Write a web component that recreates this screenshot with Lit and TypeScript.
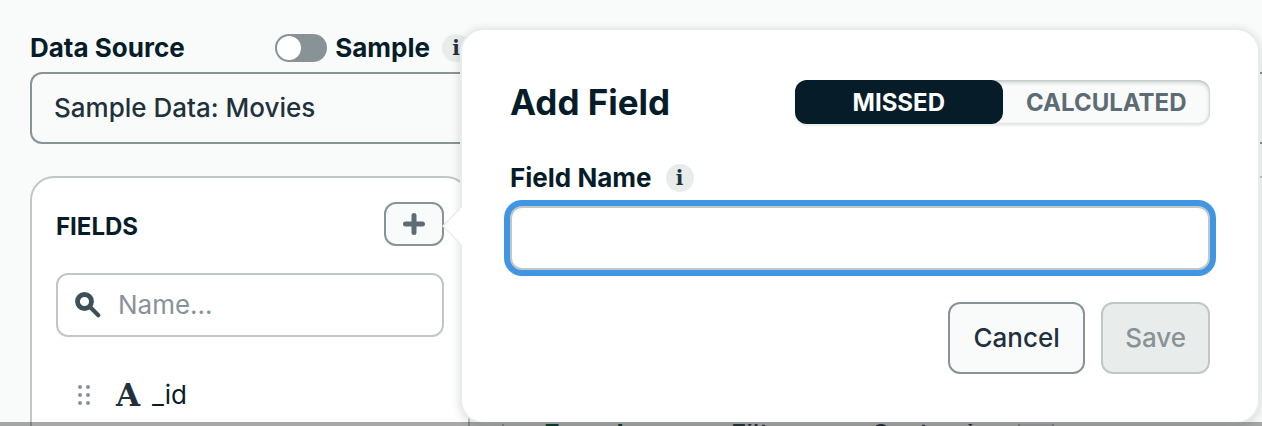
import { LitElement, html, svg, css } from "lit";
import { customElement, state } from "lit/decorators.js";

@customElement("info-badge")
class InfoBadge extends LitElement {
  static styles = css`
    :host {
      display: inline-flex;
      flex: none;
      align-items: center;
      justify-content: center;
      width: 28px;
      height: 28px;
      border-radius: 50%;
      background: #e8edeb;
      color: #21313c;
      font: 700 20px/28px "DejaVu Serif", serif;
    }
  `;
  render() {
    return html`<span>i</span>`;
  }
}

@customElement("add-field-popover")
class AddFieldPopover extends LitElement {
  static styles = css`
    :host {
      display: block;
      box-sizing: border-box;
      border: 2px solid #e8edeb;
      border-radius: 24px;
      padding: 50px 48px 48px;
      background: #fff;
      box-shadow: 0 2px 8px 1px rgba(6, 22, 33, 0.13);
    }
    .arrow {
      position: absolute;
      left: -20px;
      top: 177px;
      width: 20px;
      height: 38px;
    }
    .head {
      display: flex;
      align-items: center;
      justify-content: space-between;
      margin-bottom: 40px;
    }
    h2 {
      margin: 0;
      font-size: 35px;
      line-height: 44px;
      font-weight: 700;
    }
    .segments {
      display: grid;
      grid-template-columns: 1fr 1fr;
      width: 415px;
      border-radius: 12px;
      background: #f9fbfa;
      box-shadow: inset 0 2px 4px #b8c4c2, inset 0 0 2px #b8c4c2,
        0 2px 2px #e8edeb;
    }
    .segments button {
      height: 44px;
      padding: 2px 0 0;
      border: 0;
      border-radius: 12px;
      background: transparent;
      color: #5d6c74;
      font: 700 24px/32px Inter, sans-serif;
    }
    .segments button[aria-pressed="true"] {
      background: #061d29;
      color: #fff;
    }
    .label {
      display: flex;
      align-items: center;
      gap: 14px;
      margin-bottom: 14px;
      font-size: 26px;
      line-height: 28px;
      font-weight: 700;
    }
    input {
      display: block;
      box-sizing: border-box;
      width: 100%;
      height: 64px;
      padding: 0 22px;
      border: 2px solid #c1c7c6;
      border-radius: 12px;
      outline: none;
      background: #fff;
      box-shadow: 0 0 0 6px #4196e4;
      color: #21313c;
      font: 400 26px/32px Inter, sans-serif;
    }
    .actions {
      display: flex;
      justify-content: flex-end;
      gap: 16px;
      margin-top: 32px;
    }
    .actions button {
      height: 72px;
      padding: 0 22px;
      border: 2px solid #889397;
      border-radius: 12px;
      background: #f9fbfa;
      color: #21313c;
      font: 500 26px/32px Inter, sans-serif;
    }
    .actions .cancel {
      min-width: 137px;
    }
    .actions button:disabled {
      border-color: #c1c7c6;
      background: #e8edeb;
      color: #889397;
    }
  `;
  @state() mode = "Missed";
  render() {
    return html`
      <svg class="arrow" viewBox="0 0 20 38" aria-hidden="true">
        <path d="M18 1 1 19 18 37H20V1Z" fill="#fff" />
        <path d="M18 1.500 1 19 18 36.500" fill="none" stroke="#e8edeb" stroke-width="1.500" />
      </svg>
      <div class="head">
        <h2>Add Field</h2>
        <div class="segments" role="group" aria-label="Field type">
          ${["Missed", "Calculated"].map(
            (m) => html`<button
              type="button"
              aria-pressed=${String(m === this.mode)}
              @click=${() => (this.mode = m)}
            >${m.toUpperCase()}</button>`
          )}
        </div>
      </div>
      <div class="label"><label for="field-name">Field Name</label><info-badge></info-badge></div>
      <input id="field-name" type="text" />
      <div class="actions">
        <button class="cancel" type="button">Cancel</button>
        <button type="button" disabled>Save</button>
      </div>
    `;
  }
}

@customElement("app-root")
class AppRoot extends LitElement {
  static styles = css`
    :host {
      display: block;
      position: relative;
      box-sizing: border-box;
      height: 100vh;
      overflow: hidden;
      background: #f9fbfa;
      color: #061d29;
      font: 400 26px/32px Inter, sans-serif;
    }
    .page {
      display: flex;
      flex-direction: column;
      padding: 34px 0 0 30px;
    }
    .source-head {
      display: flex;
      align-items: center;
      width: 440px;
      margin-bottom: 10px;
      font-weight: 700;
      line-height: 28px;
    }
    .sample {
      display: flex;
      align-items: center;
      gap: 8px;
      margin-left: auto;
      margin-right: 12px;
    }
    .toggle {
      appearance: none;
      box-sizing: border-box;
      width: 52px;
      height: 28px;
      margin: 0;
      padding: 2px;
      border-radius: 14px;
      background: #889397;
    }
    .toggle::before {
      content: "";
      display: block;
      width: 24px;
      height: 24px;
      border-radius: 50%;
      background: #fff;
    }
    .toggle:checked::before {
      margin-left: auto;
    }
    .source {
      appearance: none;
      box-sizing: border-box;
      width: 100%;
      height: 72px;
      padding: 0 22px;
      border: 2px solid #889397;
      border-right: 0;
      border-radius: 12px 0 0 12px;
      background: #f9fbfa;
      color: #21313c;
      font: 500 26px/32px Inter, sans-serif;
    }
    .columns {
      display: grid;
      grid-template-columns: 440px 1fr;
      gap: 32px;
      margin-top: 32px;
    }
    .fields {
      box-sizing: border-box;
      min-height: 400px;
      padding: 24px;
      border: 2px solid #c1c7c6;
      border-radius: 24px;
      background: #fff;
    }
    .fields-head {
      display: flex;
      align-items: flex-end;
      justify-content: space-between;
      margin-bottom: 27px;
    }
    h3 {
      margin: 0;
      font-size: 24px;
      line-height: 38px;
      font-weight: 700;
    }
    .add {
      display: flex;
      align-items: center;
      justify-content: center;
      width: 60px;
      height: 44px;
      padding: 0;
      border: 2px solid #889397;
      border-radius: 12px;
      background: #f9fbfa;
    }
    .search {
      display: flex;
      align-items: center;
      gap: 16px;
      height: 60px;
      padding: 0 16px;
      border: 2px solid #c1c7c6;
      border-radius: 12px;
    }
    .search input {
      flex: 1;
      min-width: 0;
      padding: 0;
      border: 0;
      outline: none;
      background: none;
      font: 400 26px/32px Inter, sans-serif;
    }
    .search input::placeholder {
      color: #889397;
      opacity: 1;
    }
    .search svg,
    .grip {
      flex: none;
    }
    .row {
      display: flex;
      align-items: center;
      height: 48px;
      margin-top: 34px;
      padding-left: 20px;
    }
    .kind {
      margin: 0 12px 0 24px;
      color: #21313c;
      font: 700 31px/48px "DejaVu Serif", serif;
    }
    .panel {
      box-sizing: border-box;
      padding-top: 240px;
      border: 2px solid #c1c7c6;
      border-right: 0;
      border-radius: 24px 0 0 0;
    }
    .tabs {
      display: grid;
      grid-template-columns: 187px 140px 147px 36px;
      padding-left: 40px;
    }
    .tab {
      padding: 0;
      border: 0;
      background: none;
      color: #3d4f58;
      text-align: left;
      font: 500 26px/32px Inter, sans-serif;
    }
    .tab.on {
      color: #116149;
      font-weight: 700;
    }
    .more {
      height: 32px;
      padding: 0;
      border: 2px solid #b8c4c2;
      background: #e8edeb;
    }
    add-field-popover {
      position: absolute;
      left: 460px;
      right: 2px;
      top: 28px;
    }
    .shade {
      position: absolute;
      left: 0;
      right: 0;
      bottom: 0;
      height: 4px;
      background: rgba(0, 0, 0, 0.34);
    }
  `;
  render() {
    return html`
      <div class="page">
        <div class="source-head">
          <label for="source">Data Source</label>
          <label class="sample"
            ><input class="toggle" type="checkbox" role="switch" />Sample</label
          >
          <info-badge></info-badge>
        </div>
        <select class="source" id="source">
          <option>Sample Data: Movies</option>
        </select>
        <div class="columns">
          <section class="fields">
            <div class="fields-head">
              <h3>FIELDS</h3>
              <button class="add" type="button" aria-label="Add field">
                <svg width="22" height="22" viewBox="0 0 22 22">
                  <path d="M11 2.500v17M2.500 11h17" stroke="#5d6c74" stroke-width="5" stroke-linecap="round" />
                </svg>
              </button>
            </div>
            <div class="search">
              <svg width="28" height="28" viewBox="0 0 28 28" aria-hidden="true">
                <circle cx="10.500" cy="10.500" r="7" fill="none" stroke="#3d4f58" stroke-width="4.800" />
                <path d="M16 16l8.300 8.300" stroke="#3d4f58" stroke-width="4.200" stroke-linecap="round" />
              </svg>
              <input type="text" placeholder="Name..." aria-label="Filter fields by name" />
            </div>
            <div class="row">
              <svg class="grip" width="16" height="22" viewBox="0 0 16 22" fill="#889397" aria-hidden="true">
                ${[3, 11, 19].map((y) =>
                  [4, 12].map((x) => svg`<circle cx=${x} cy=${y} r="2" />`)
                )}
              </svg>
              <span class="kind">A</span>
              <span>_id</span>
            </div>
          </section>
          <section class="panel">
            <div class="tabs">
              <button class="tab on" type="button">Encode</button>
              <button class="tab" type="button">Filter</button>
              <button class="tab" type="button">Customize</button>
              <button class="more" type="button" aria-label="More"></button>
            </div>
          </section>
        </div>
      </div>
      <add-field-popover role="dialog" aria-label="Add Field"></add-field-popover>
      <div class="shade"></div>
    `;
  }
}
